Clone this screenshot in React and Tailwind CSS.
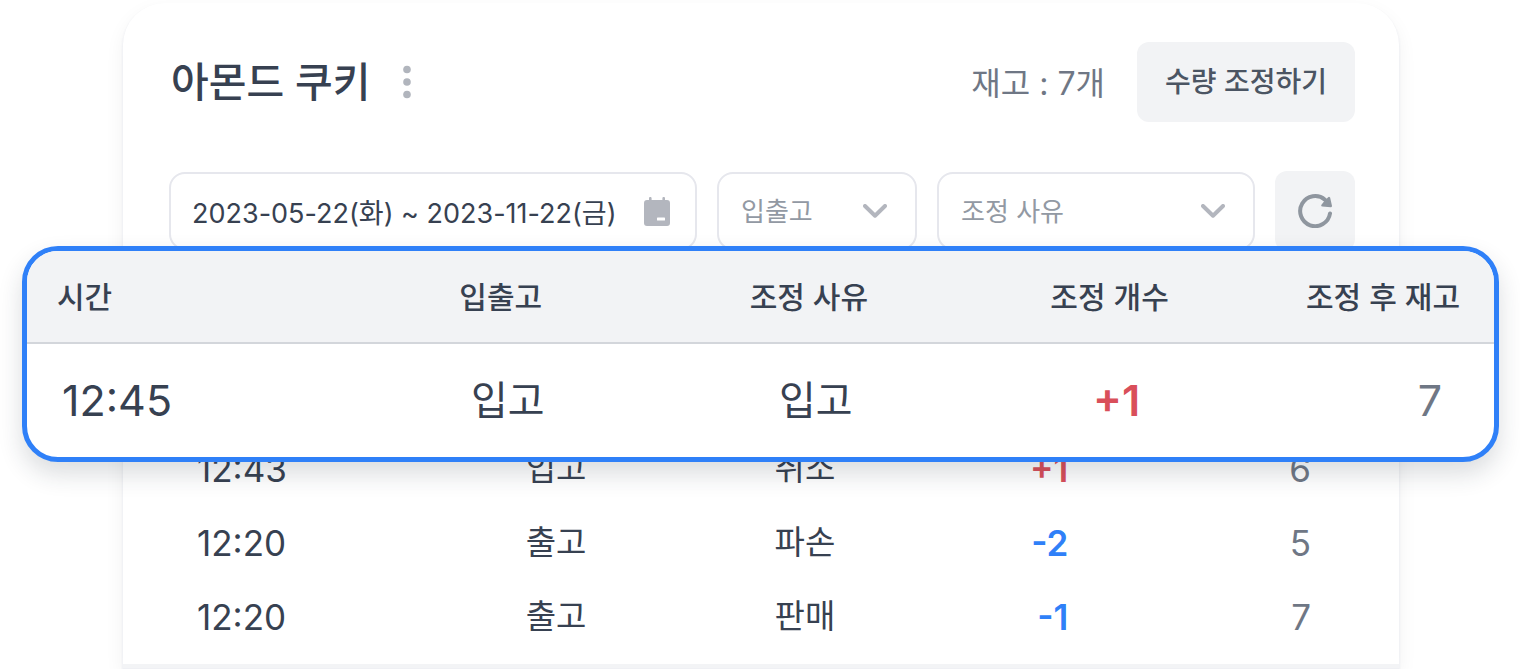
const columns = ["시간", "입출고", "조정 사유", "조정 개수", "조정 후 재고"];

const latest = { time: "12:45", type: "입고", reason: "입고", amount: "+1", stock: 7 };

const history = [
  { time: "12:43", type: "입고", reason: "취소", amount: "+1", stock: 6 },
  { time: "12:20", type: "출고", reason: "파손", amount: "-2", stock: 5 },
  { time: "12:20", type: "출고", reason: "판매", amount: "-1", stock: 7 },
];

const amountColor = (amount) =>
  amount.startsWith("+") ? "text-[#d94f5a]" : "text-[#2f80f8]";

const ColumnWidths = () => (
  <colgroup>
    <col className="w-[22%]" />
    <col className="w-[21%]" />
    <col className="w-[21%]" />
    <col className="w-[20%]" />
    <col className="w-[16%]" />
  </colgroup>
);

const MoreIcon = () => (
  <svg width="8" height="34" viewBox="0 0 8 34" fill="#b1b5bd">
    <circle cx="4" cy="4.5" r="3.8" />
    <circle cx="4" cy="17" r="3.8" />
    <circle cx="4" cy="29.5" r="3.8" />
  </svg>
);

const CalendarIcon = () => (
  <svg width="26" height="29" viewBox="0 0 26 29">
    <path
      d="M5 1.2a1.3 1.3 0 0 1 2.6 0V3h10.8V1.2a1.3 1.3 0 0 1 2.6 0V3h2a3 3 0 0 1 3 3v20a3 3 0 0 1-3 3H3a3 3 0 0 1-3-3V6a3 3 0 0 1 3-3h2z"
      fill="#b3b6be"
    />
    <rect x="13" y="20.5" width="8" height="3" rx="0.6" fill="#fff" />
  </svg>
);

const ChevronIcon = () => (
  <svg width="24" height="14" viewBox="0 0 24 14" fill="none">
    <path
      d="M2 2l10 9.7L22 2"
      stroke="#b3b6be"
      strokeWidth="4"
      strokeLinecap="round"
      strokeLinejoin="round"
    />
  </svg>
);

const RefreshIcon = () => (
  <svg width="34" height="34" viewBox="0 0 34 34" fill="none">
    <path
      d="M32 19.5A15 15 0 1 1 27 5.8"
      stroke="#8f969f"
      strokeWidth="4"
      strokeLinecap="round"
    />
    <path
      d="M31 4L32.8 12L24.4 11.4L27.5 7.5Z"
      fill="#8f969f"
      stroke="#8f969f"
      strokeWidth="2.4"
      strokeLinejoin="round"
    />
  </svg>
);

const FilterSelect = ({ label, className }) => (
  <div className={`relative ${className}`}>
    <select
      aria-label={label}
      className="h-[78px] w-full appearance-none rounded-2xl border-2 border-[#e6e7ed] bg-white pl-[22px] text-[26px] text-[#9299a3]"
    >
      <option>{label}</option>
    </select>
    <span className="pointer-events-none absolute inset-y-0 right-[30px] flex items-center">
      <ChevronIcon />
    </span>
  </div>
);

const App = () => {
  return (
    <div className="overflow-hidden bg-white pt-[3px] pr-[121px] pb-px pl-[123px] font-['Inter','Noto_Sans_CJK_KR',sans-serif] text-[#374151]">
      <main className="rounded-t-[42px] border-b-4 border-[#f3f4f6] bg-white pt-[39px] shadow-[0_2px_2px_1px_#eff0f4,0_8px_20px_rgba(0,0,0,0.06)]">
        <header className="flex h-20 items-center justify-between pr-11 pl-12">
          <div className="flex items-center gap-8">
            <h1 className="text-[41px] leading-[60px] font-medium">아몬드 쿠키</h1>
            <button type="button" aria-label="더보기">
              <MoreIcon />
            </button>
          </div>
          <div className="flex items-center gap-8">
            <p className="pt-1 text-[32px] text-[#6f7785]">재고 : 7개</p>
            <button
              type="button"
              className="h-20 rounded-xl bg-[#f2f3f5] px-7 text-[28px] font-medium text-[#4b5563]"
            >
              수량 조정하기
            </button>
          </div>
        </header>

        <div className="mt-[49px] flex items-center gap-5 pr-11 pl-[46px]">
          <div className="relative flex-1">
            <input
              type="text"
              aria-label="조회 기간"
              defaultValue="2023-05-22(화) ~ 2023-11-22(금)"
              className="h-[78px] w-full rounded-2xl border-2 border-[#e6e7ed] bg-white pl-[21px] text-[27px]"
            />
            <span className="pointer-events-none absolute inset-y-0 right-[27px] flex items-center">
              <CalendarIcon />
            </span>
          </div>
          <FilterSelect label="입출고" className="w-[200px]" />
          <FilterSelect label="조정 사유" className="w-[318px]" />
          <button
            type="button"
            aria-label="새로고침"
            className="flex size-20 items-center justify-center rounded-xl bg-[#f2f3f5]"
          >
            <RefreshIcon />
          </button>
        </div>

        {/* latest entry, lifted above the card */}
        <section className="relative z-10 -mt-[5px] -mr-[100px] -ml-[101px] overflow-hidden rounded-[36px] border-[5px] border-[#2f80f8] bg-white shadow-[0_12px_24px_rgba(30,41,59,0.16)]">
          <table className="w-full table-fixed">
            <ColumnWidths />
            <thead>
              <tr className="h-[92px] border-b-2 border-[#d3d6db] bg-[#f2f3f5] text-[30px]">
                {columns.map((column) => (
                  <th
                    key={column}
                    className="pt-[2px] pr-1.5 font-medium first:pl-[30px] first:text-left last:pr-[34px] last:text-right"
                  >
                    {column}
                  </th>
                ))}
              </tr>
            </thead>
            <tbody>
              <tr className="h-[114px] text-[40px]">
                <td className="pl-[35px] text-[43px]">{latest.time}</td>
                <td className="pl-2 text-center">{latest.type}</td>
                <td className="pl-2 text-center">{latest.reason}</td>
                <td
                  className={`pl-2 text-center text-[43px] font-semibold ${amountColor(latest.amount)}`}
                >
                  {latest.amount}
                </td>
                <td className="pr-[52px] text-right text-[43px] text-[#6f7785]">
                  {latest.stock}
                </td>
              </tr>
            </tbody>
          </table>
        </section>

        <div className="-mt-[30px] pr-11 pb-[10px] pl-[47px]">
          <table className="w-full table-fixed">
            <ColumnWidths />
            <tbody>
              {history.map((item, index) => (
                <tr key={index} className="h-[74px] text-[33px]">
                  <td className="pl-[27px] text-[35px]">{item.time}</td>
                  <td className="pl-0.5 text-center">{item.type}</td>
                  <td className="pl-0.5 text-center">{item.reason}</td>
                  <td
                    className={`pr-[97px] text-right text-[35px] font-semibold ${amountColor(item.amount)}`}
                  >
                    {item.amount}
                  </td>
                  <td className="pr-11 text-right text-[35px] text-[#6f7785]">
                    {item.stock}
                  </td>
                </tr>
              ))}
            </tbody>
          </table>
        </div>
      </main>
    </div>
  );
};

export default App;
